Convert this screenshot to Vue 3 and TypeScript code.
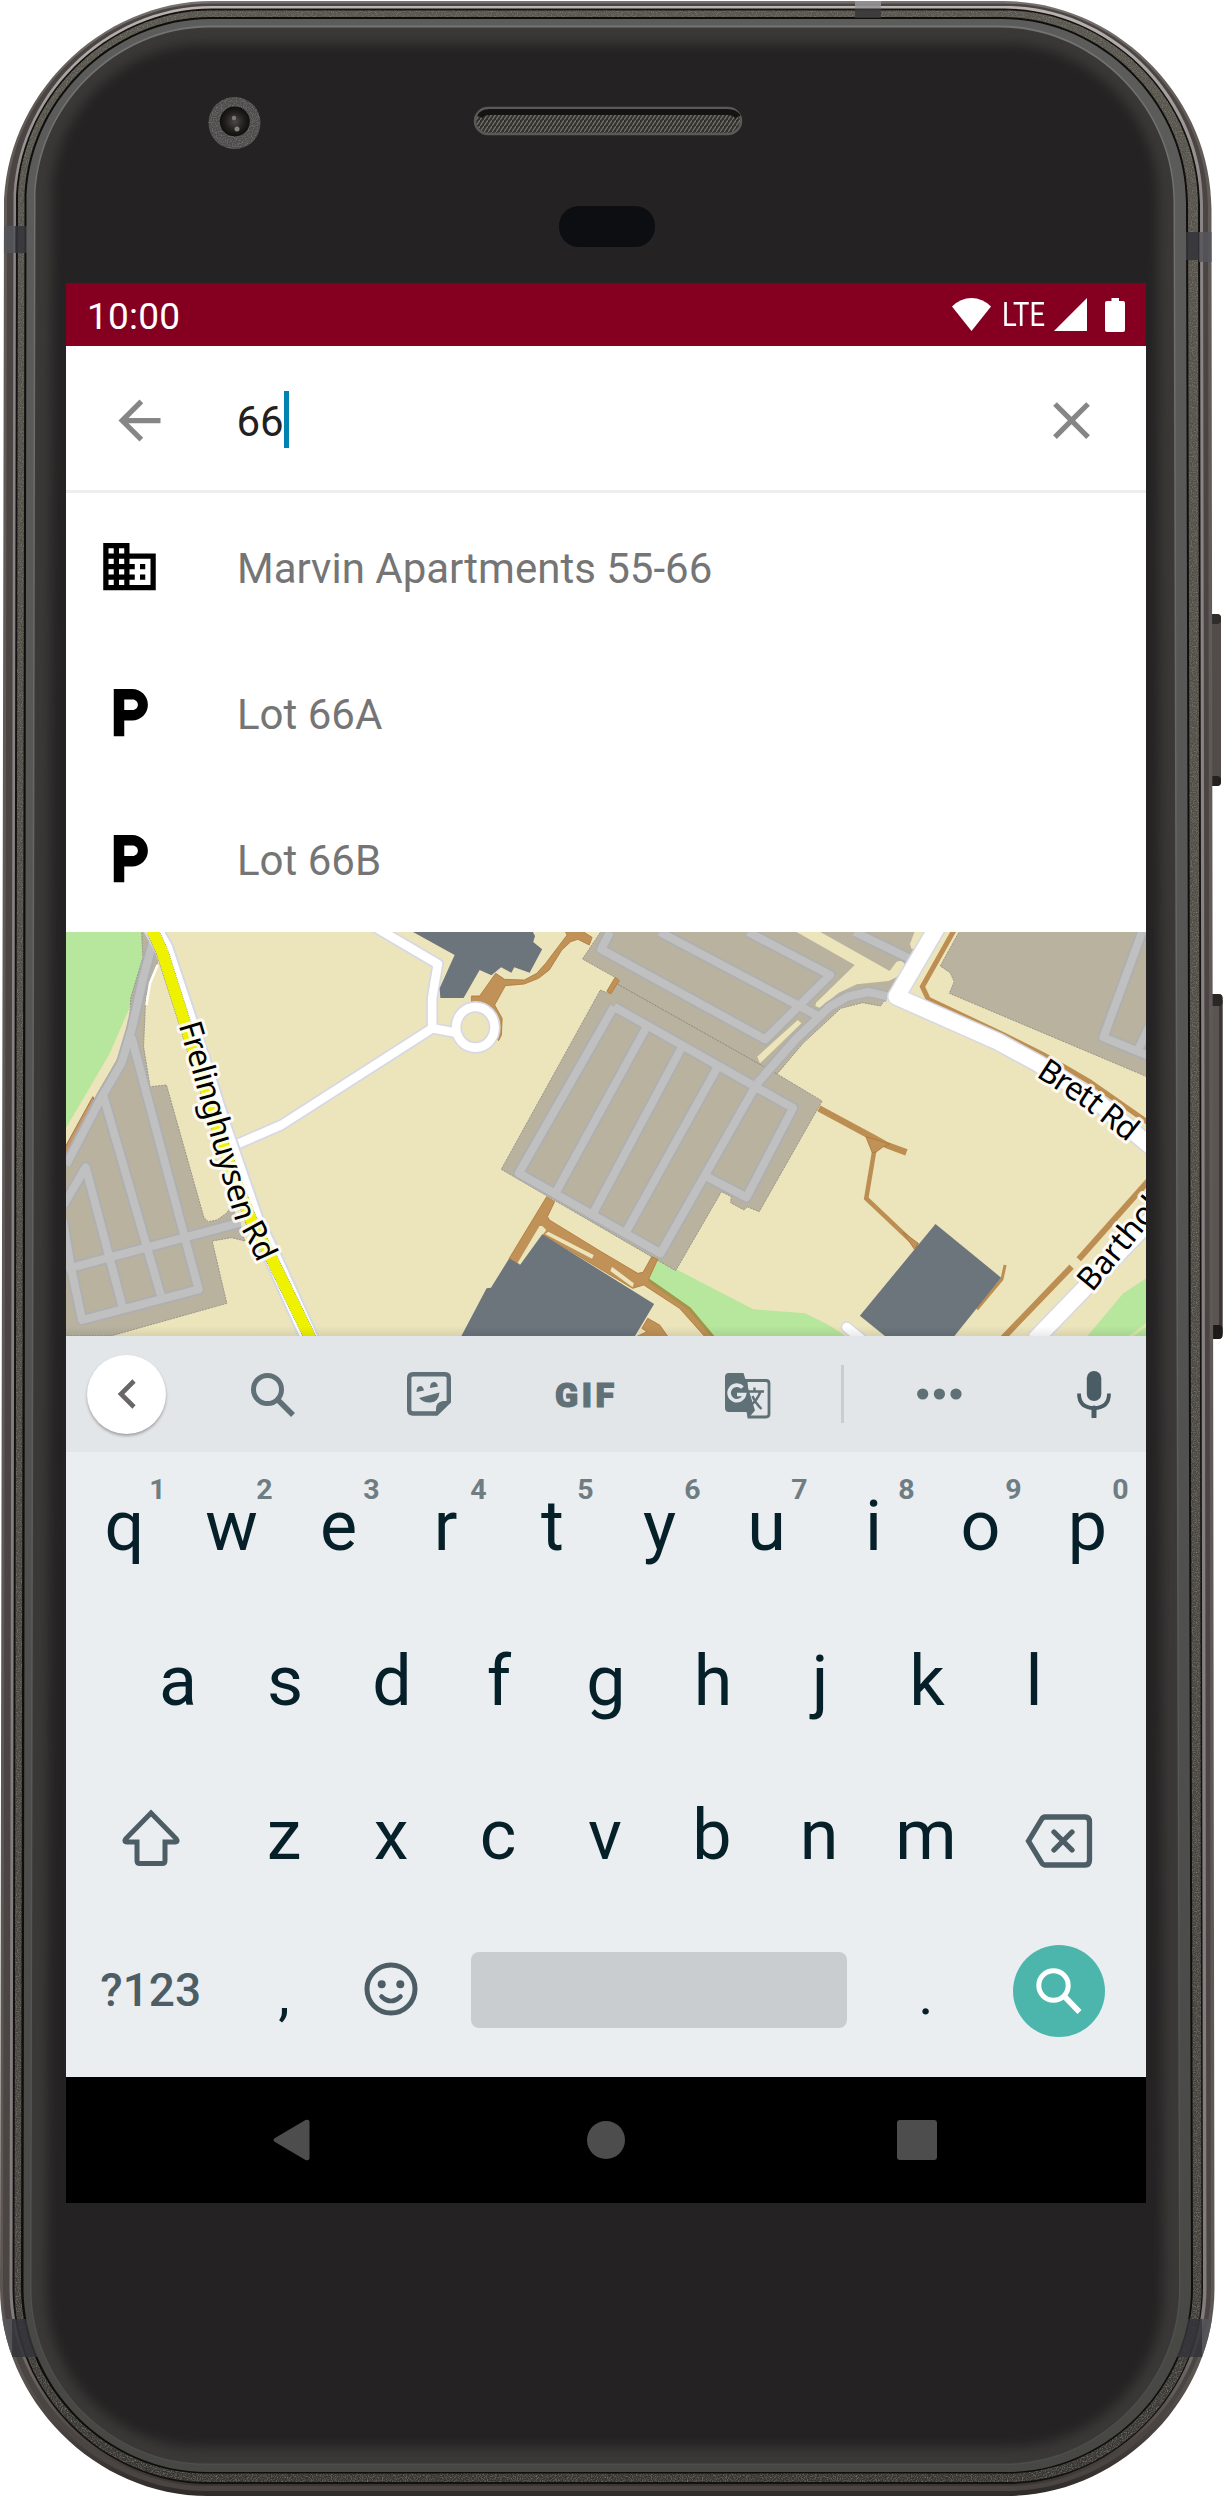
<script setup lang="ts">
interface Key {
  label: string
  hint?: string
}

interface Result {
  kind: 'building' | 'parking'
  name: string
}

const query = '66'

const results: Result[] = [
  { kind: 'building', name: 'Marvin Apartments 55-66' },
  { kind: 'parking', name: 'Lot 66A' },
  { kind: 'parking', name: 'Lot 66B' },
]

const iconPaths: Record<Result['kind'], string> = {
  building:
    'M12 7V3H2v18h20V7H12zM6 19H4v-2h2v2zm0-4H4v-2h2v2zm0-4H4V9h2v2zm0-4H4V5h2v2zm4 12H8v-2h2v2zm0-4H8v-2h2v2zm0-4H8V9h2v2zm0-4H8V5h2v2zm10 12h-8v-2h2v-2h-2v-2h2v-2h-2V9h8v10zm-2-8h-2v2h2v-2zm0 4h-2v2h2v-2z',
  parking:
    'M13 3H6v18h4v-6h3c3.31 0 6-2.69 6-6s-2.69-6-6-6zm.2 8H10V7h3.2c1.1 0 2 .9 2 2s-.9 2-2 2z',
}

const topRow: Key[] = 'qwertyuiop'.split('').map((label, i) => ({ label, hint: String((i + 1) % 10) }))
const homeRow: Key[] = 'asdfghjkl'.split('').map((label) => ({ label }))
const bottomRow: Key[] = 'zxcvbnm'.split('').map((label) => ({ label }))

// The body is slightly wider at the bottom, so every ring has its own top and bottom edges.
function ring(lt: number, lb: number, rt: number, rb: number, t: number, b: number, r: number): string {
  const k = r * 0.46
  return [
    `M${lt + r} ${t}H${rt - r}`,
    `C${rt - k} ${t} ${rt} ${t + k} ${rt} ${t + r}`,
    `L${rb} ${b - r}`,
    `C${rb} ${b - k} ${rb - k} ${b} ${rb - r} ${b}`,
    `H${lb + r}`,
    `C${lb + k} ${b} ${lb} ${b - k} ${lb} ${b - r}`,
    `L${lt} ${t + r}`,
    `C${lt} ${t + k} ${lt + k} ${t} ${lt + r} ${t}Z`,
  ].join('')
}

const shell = ring(4, 0, 1211.5, 1214.5, 1, 2496, 208)
const bezel = ring(26.5, 23.5, 1186, 1191, 19, 2472, 184)

const rings = [
  { d: shell, fill: 'url(#metal)' },
  { d: ring(7, 3, 1208, 1211, 3.5, 2491, 204), fill: '#4a4442' },
  { d: ring(13.5, 9.5, 1203, 1206.5, 6, 2486, 198), fill: 'url(#rim)' },
  { d: ring(16, 12.5, 1200, 1203, 8.5, 2484, 196), fill: '#141210' },
  { d: ring(18, 14.5, 1198, 1201.5, 10.5, 2482, 193), fill: 'url(#band)' },
  { d: ring(24.5, 21, 1188, 1193, 17, 2473.5, 186), fill: '#0f0e0d' },
]
const innerRings = [
  { d: bezel, fill: 'url(#bevel)' },
  { d: ring(34, 30, 1175, 1180.5, 25.5, 2465, 176), fill: 'url(#glint)' },
  { d: ring(35.5, 31.5, 1173.5, 1179, 27.5, 2463.5, 174), fill: '#3a3937' },
]
const glass = ring(52, 47, 1158, 1163, 44, 2447, 152)

// Centre lines of the lanes inside the parking lots.
const westAisles =
  'M262 60L235 165L200 330L172 430L112 540L17 735M200 350L388 1108L62 1200L30 1040L8 900M122 530L282 1125M10 855L72 742L176 1165M17 1047L505 908'
const centralAisles =
  'M25 36L3 88L415 358L578 165L372 36M150 36L548 288M640 36L785 120M722 229L675 216L622 230L577 260L490 360L395 490M35 260L485 564L368 832L265 768M35 260L-204 760L152 1000L395 490M115 325L-110 815M205 383L-15 875M295 442L68 930'
const eastAisles = 'M1364 30L1265 352L1400 418M1352 390L1380 320'
</script>

<template>
  <main class="phone">
    <svg class="body" width="1224" height="2498" viewBox="0 0 1224 2498" aria-hidden="true">
      <defs>
        <linearGradient id="metal" x1="0" y1="0" x2="0" y2="1">
          <stop offset="0" stop-color="#76706e" />
          <stop offset=".04" stop-color="#625c59" />
          <stop offset=".95" stop-color="#5c5653" />
          <stop offset="1" stop-color="#2f2b28" />
        </linearGradient>
        <linearGradient id="rim" x1="0" y1="0" x2="0" y2="1">
          <stop offset="0" stop-color="#b9b3b2" />
          <stop offset=".08" stop-color="#8c8585" />
          <stop offset=".93" stop-color="#837c7d" />
          <stop offset="1" stop-color="#3a3632" />
        </linearGradient>
        <linearGradient id="band" x1="0" y1="0" x2="0" y2="1">
          <stop offset="0" stop-color="#57544c" />
          <stop offset=".9" stop-color="#45423c" />
          <stop offset="1" stop-color="#36342f" />
        </linearGradient>
        <linearGradient id="bevel" x1="0" y1="0" x2="0" y2="1">
          <stop offset="0" stop-color="#5c5c5b" />
          <stop offset=".4" stop-color="#555554" />
          <stop offset="1" stop-color="#474744" />
        </linearGradient>
        <linearGradient id="glint" x1="0" y1="0" x2="0" y2="1">
          <stop offset="0" stop-color="#737373" />
          <stop offset="1" stop-color="#4d4d4b" />
        </linearGradient>
        <radialGradient id="lens">
          <stop offset="0" stop-color="#4b4845" />
          <stop offset=".6" stop-color="#23211f" />
          <stop offset="1" stop-color="#0f0e0d" />
        </radialGradient>
        <pattern id="mesh" width="4" height="6" patternUnits="userSpaceOnUse">
          <rect width="4" height="6" fill="#33322f" />
          <path d="M-1 7.5L5 -1.5" stroke="#706e68" stroke-width="1.3" />
        </pattern>
        <filter id="soft" x="-5%" y="-5%" width="110%" height="110%" color-interpolation-filters="sRGB">
          <feGaussianBlur stdDeviation="6" />
        </filter>
        <filter id="grain" x="0" y="0" width="100%" height="100%" color-interpolation-filters="sRGB">
          <feTurbulence type="fractalNoise" baseFrequency=".8" numOctaves="2" result="n" />
          <feColorMatrix in="n" type="matrix" values="0 0 0 0 .52  0 0 0 0 .51  0 0 0 0 .49  1.8 0 0 0 -.75" />
          <feComposite in2="SourceGraphic" operator="in" result="g" />
          <feMerge>
            <feMergeNode in="SourceGraphic" />
            <feMergeNode in="g" />
          </feMerge>
        </filter>
        <clipPath id="outline"><path :d="shell" /></clipPath>
      </defs>

      <rect x="1206" y="614" width="15" height="172" rx="4" fill="#514c49" />
      <rect x="1206" y="614" width="15" height="10" rx="4" fill="#2f2c2a" />
      <rect x="1206" y="776" width="15" height="10" rx="4" fill="#24211f" />
      <rect x="1206" y="994" width="16.500" height="345" rx="4" fill="#5a5552" />
      <rect x="1219" y="1000" width="3.500" height="334" fill="#3d3836" />
      <rect x="1206" y="994" width="16.500" height="12" rx="4" fill="#2a2725" />
      <rect x="1206" y="1325" width="16.500" height="14" rx="4" fill="#1d1a19" />

      <path
        v-for="(layer, i) in rings"
        :key="i"
        :d="layer.d"
        :fill="layer.fill"
        :filter="i === 4 ? 'url(#grain)' : undefined"
      />
      <g clip-path="url(#outline)">
        <path d="M0 226H15V253H0zM1199 232H1216V262H1199zM0 2319H14V2355H0zM1202 2319H1216V2357H1200z" fill="#55565b" opacity=".85" />
        <path d="M15 226H30V253H15zM1183 232H1199V260H1183zM12 2319H30L40 2357H12zM1180 2319H1202V2357H1175z" fill="#34343a" opacity=".85" />
        <path d="M855 0H881V8H855z" fill="#98979a" opacity=".85" />
        <path d="M855 9H881V18H855z" fill="#38373a" opacity=".85" />
      </g>
      <path v-for="(layer, i) in innerRings" :key="i" :d="layer.d" :fill="layer.fill" />
      <path :d="glass" fill="#242223" filter="url(#soft)" />

      <circle cx="234.500" cy="123" r="26" fill="#4d4b4c" filter="url(#grain)" />
      <circle cx="234.800" cy="121.500" r="15" fill="url(#lens)" />
      <circle cx="234" cy="118" r="2.200" fill="#7d7975" />
      <circle cx="237" cy="129" r="2.500" fill="#85817d" />

      <rect x="475" y="108" width="266" height="26" rx="13" fill="url(#mesh)" stroke="#5a5858" stroke-width="2.500" />
      <path d="M480 117Q482 112 490 112H727Q735 112 738 117" fill="none" stroke="#151412" stroke-width="6" />
      <rect x="559" y="206" width="96" height="41" rx="20" fill="#0d0e11" />
    </svg>

    <section class="screen">
      <header class="status">
        <span class="clock">10:00</span>
        <div class="status-icons">
          <svg class="wifi" width="39" height="33" viewBox="0 0 39 33">
            <path d="M19.500 33L0 8.500Q8.500 0 19.500 0T39 8.500z" fill="#fff" />
          </svg>
          <span class="lte">LTE</span>
          <svg class="signal" width="33" height="33" viewBox="0 0 33 33"><path d="M0 33L33 0V33z" fill="#fff" /></svg>
          <svg class="battery" width="20" height="34" viewBox="0 0 20 34">
            <path d="M6.500 0H14V3H18Q20 3 20 5V32Q20 34 18 34H2Q0 34 0 32V5Q0 3 2 3H6.500z" fill="#fff" />
          </svg>
        </div>
      </header>

      <div class="search">
        <svg class="back" width="63" height="63" viewBox="0 0 24 24">
          <path d="M20 11H7.830l5.590-5.590L12 4l-8 8 8 8 1.410-1.410L7.830 13H20v-2z" fill="#868686" />
        </svg>
        <span class="query">{{ query }}</span>
        <i class="caret"></i>
        <svg class="clear" width="63" height="63" viewBox="0 0 24 24">
          <path
            d="M19 6.410L17.590 5 12 10.590 6.410 5 5 6.410 10.590 12 5 17.590 6.410 19 12 13.410 17.590 19 19 17.590 13.410 12z"
            fill="#868686"
          />
        </svg>
      </div>

      <ul class="results">
        <li v-for="item in results" :key="item.name">
          <svg width="63" height="63" viewBox="0 0 24 24"><path :d="iconPaths[item.kind]" /></svg>
          <span>{{ item.name }}</span>
        </li>
      </ul>

      <svg class="map" width="1080" height="404" viewBox="66 932 1080 404">
        <rect x="66" y="932" width="1080" height="404" fill="#ece4bb" />

        <g class="tile" transform="translate(60 920) scale(.35714 .33333)">
          <path class="green" d="M0 36H228L232 112L192 270L138 403L0 655z" />
          <path
            class="lot"
            d="M228 30H262L275 120L240 230L234 380L252 500L298 495L403 893L415 905L440 900L468 878L480 855L518 963L480 953L426 963L467 1150L145 1247H0V740L100 530L165 410L190 340L195 300L198 235L232 112z"
          />
          <path d="M10 690L92 530L103 560L10 740z" fill="#c4986d" stroke="#a9763f" stroke-width="1" />
          <path class="aisle-edge" :d="westAisles" />
          <path class="aisle" :d="westAisles" />
          <path d="M242 255L252 190L273 135" fill="none" stroke="#fff" stroke-width="2.500" />

          <path
            class="path"
            d="M1152 228H1175L1220 160L1245 178L1300 180L1335 160L1360 130L1395 80L1420 45L1412 30H1457L1490 52L1482 75L1450 58L1430 65L1405 90L1370 150L1340 175L1300 192L1247 197L1217 255L1238 295L1236 345L1228 362L1222 355L1226 300L1200 262L1152 248z"
          />
          <path class="road-edge" d="M880 20L1058 132L1042 235V325L620 615L480 680M1042 325L1110 338" />
          <ellipse class="road-edge" cx="1163" cy="322" rx="54" ry="61" />
          <path class="road" d="M880 20L1058 132L1042 235V325L620 615L480 680M1042 325L1110 338" />
          <ellipse class="road" cx="1163" cy="322" rx="54" ry="61" />

          <path
            class="building"
            d="M975 28L1105 105L1063 205L1065 234H1130L1175 150L1208 166L1235 142L1264 158L1272 142L1315 158L1350 88L1325 66L1330 48L1320 28z"
          />

          <g fill="none">
            <path d="M258 20L292 85L362 310L402 440L455 620L500 760L545 900L595 1010L705 1270" stroke="#d6d8e3" stroke-width="20" />
            <path d="M258 20L292 85L362 310L402 440L455 620L500 760L545 900L595 1010L705 1270" stroke="#fff" stroke-width="16" />
            <path d="M254 20L286 95L350 310L388 440L440 620L483 760L535 900L590 1010L708 1270" stroke="#7e7a3a" stroke-width="12.500" stroke-dasharray="1 1" />
            <path d="M254 20L286 95L350 310L388 440L440 620L483 760L535 900L590 1010L708 1270" stroke="#eef200" stroke-width="11.500" />
          </g>
        </g>

        <g class="tile" transform="translate(600 920) scale(.39796 .33333)">
          <path class="green" d="M145 1020L195 1050L385 1168L515 1180L575 1215L620 1250H285L225 1165L122 1078z" />
          <path class="green" d="M1222 1252L1315 1120L1376 1072V1252z" />
          <path d="M1330 1252L1376 1212" stroke="#d9e8ab" stroke-width="3" />

          <path class="lot" d="M5 30L-44 117L50 180L20 220L1 210L-248 748L190 1052L305 815L330 830L328 848L362 870L370 860L400 875L558 543L445 462L510 370L605 265L660 248L705 258L830 30z" />
          <path class="land" d="M485 30H545L728 153L745 125L757 122L765 130L762 150L745 172L725 183L645 193L600 218L552 263L541 258L543 248L640 135z" />
          <path class="land" d="M792 30H830L800 85L783 87L779 72zM497 300L506 310L402 430L395 410z" />
          <path d="M45 193L445 462" stroke="#8b897f" stroke-width="1" stroke-dasharray="2 1" />
          <path class="aisle-edge" :d="centralAisles" />
          <path class="aisle" :d="centralAisles" />

          <path class="lot" d="M905 30H1380V473L878 220L890 185L880 158L855 138z" />
          <path class="aisle-edge" :d="eastAisles" />
          <path class="aisle" :d="eastAisles" />

          <path class="path" d="M38 172L48 182L27 222L17 214z" />
          <path
            class="path"
            d="M-134 830L-114 845L-132 890L-127 900L0 993L95 1060L108 1057L130 1010L145 1018L122 1078L225 1165L287 1252H265L200 1165L110 1095L82 1105L-145 943L-201 1035L-228 1015z"
          />
          <path d="M122 1080L225 1166L284 1250" fill="none" stroke="#a3954a" stroke-width="3" />
          <path class="land" d="M-152 918H-145L-135 930L-200 1035L-207 1028zM-130 935L-16 1005L-20 1016L-138 942zM30 1040L85 1090L82 1102L26 1053z" />
          <path class="path" d="M120 1195L150 1215L172 1252H88L118 1235L105 1225z" />
          <path class="building" d="M-228 1015L-201 1035L-145 943L136 1152L86 1252H-350L-285 1105L-274 1103z" />

          <g class="trail">
            <path d="M550 565L690 655L720 675L770 697" stroke-width="6.500" />
            <path d="M692 675L688 700L669 835L797 980" stroke-width="4.500" />
            <path d="M1018 1035L1010 1078L947 1168" stroke-width="3" />
            <path d="M890 30L810 200L825 238L1015 345L1115 405L1230 485L1380 610" stroke-width="5" />
            <path d="M1012 1255L1185 1040M1203 1018L1380 780" stroke-width="6" />
          </g>
          <path class="path" d="M668 650L684 698L694 696L712 680L728 672zM762 937L800 970L790 988z" />
          <path class="building" d="M843 912L1008 1073L888 1252H720L653 1187z" />

          <g fill="none" stroke-linejoin="round">
            <path d="M848 20L745 230L1000 365L1100 430L1250 545L1400 695M1092 1260L1420 855" stroke="#d6d8e3" stroke-width="19" />
            <path d="M848 20L745 230L1000 365L1100 430L1250 545L1400 695M1092 1260L1420 855" stroke="#fff" stroke-width="16" />
            <path d="M620 1222L665 1265" stroke="#d6d8e3" stroke-width="12" stroke-linecap="round" />
            <path d="M620 1222L665 1265" stroke="#fff" stroke-width="9" stroke-linecap="round" />
          </g>
        </g>

        <defs>
          <path id="frelinghuysen" d="M178.500 1025L189 1060L211 1139L234 1216L246 1238L263 1274L280 1310" />
          <path id="brett" d="M1035.500 1076L1083 1107L1140 1152" />
          <path id="barthol" d="M1092 1293L1190 1175" />
          <linearGradient id="fade" x1="0" y1="0" x2="0" y2="1">
            <stop offset="0" stop-color="#000" stop-opacity="0" />
            <stop offset="1" stop-color="#000" stop-opacity=".08" />
          </linearGradient>
        </defs>
        <g class="street">
          <text><textPath href="#frelinghuysen" textLength="252">Frelinghuysen Rd</textPath></text>
          <text><textPath href="#brett" textLength="114">Brett Rd</textPath></text>
          <text><textPath href="#barthol">Barthol</textPath></text>
        </g>
        <rect x="66" y="1326" width="1080" height="10" fill="url(#fade)" />
      </svg>

      <div class="keyboard">
        <div class="tools">
          <button class="collapse" aria-label="Back">
            <svg width="20" height="32" viewBox="0 0 20 32"><path d="M17 3L4 16L17 29" fill="none" stroke="#696665" stroke-width="4.600" /></svg>
          </button>
          <svg class="find" width="46" height="46" viewBox="0 0 46 46" fill="none" stroke="#5f7077">
            <circle cx="17.500" cy="17.500" r="14" stroke-width="5" />
            <path d="M28 28L43 43" stroke-width="5.500" />
          </svg>
          <svg class="sticker" width="44" height="44" viewBox="0 0 44 44">
            <path d="M6 2.200H38Q41.800 2.200 41.800 6V29.500L29.500 41.500H6Q2.200 41.500 2.200 37.500V6Q2.200 2.200 6 2.200z" fill="none" stroke="#5f7077" stroke-width="4.400" />
            <path d="M42 29H36Q29 30 29 37V42z" fill="#5f7077" />
            <path d="M9.500 20Q9.500 14 13.500 14Q16 14 17 18.500zM23 16Q23 10 27 10Q30 10 31 14.500zM12 26L32.500 20.500Q31.500 30 23.500 30.500Q17 31 12 26z" fill="#5f7077" />
          </svg>
          <span class="gif">GIF</span>
          <svg class="translate" width="46" height="46" viewBox="0 0 46 46">
            <path d="M21 7.500H41Q44 7.500 44 10.500V41Q44 44 41 44H24z" fill="#e3e6e9" stroke="#5f7077" stroke-width="2.800" />
            <path d="M4 0H18.500L30 37.500L23 45.500L21.500 39H4Q0 39 0 35V4Q0 0 4 0z" fill="#5f7077" />
            <path d="M17.500 14.500A7.800 7.800 0 1 0 19.500 21.500H12" fill="none" stroke="#e3e6e9" stroke-width="3.600" />
            <path d="M24 18.500H39M29.500 14.500V18.500M35.500 18.500Q32.500 27 25.500 32.500M27.500 23Q30 29.500 36.500 36" fill="none" stroke="#5f7077" stroke-width="2.400" />
          </svg>
          <i class="divider"></i>
          <svg class="more" width="45" height="12" viewBox="0 0 45 12" fill="#5f7077">
            <circle cx="5.700" cy="6" r="5.600" />
            <circle cx="22.400" cy="6" r="5.600" />
            <circle cx="39" cy="6" r="5.600" />
          </svg>
          <svg class="mic" width="34" height="47" viewBox="0 0 34 47">
            <rect x="9.800" y="0" width="14.500" height="30" rx="7.200" fill="#4a5c64" />
            <path d="M2 22.500Q2 37 17 37T32 22.500" fill="none" stroke="#4a5c64" stroke-width="3.800" />
            <path d="M17 37V46" stroke="#4a5c64" stroke-width="5" stroke-linecap="round" />
          </svg>
        </div>

        <div class="row">
          <span v-for="key in topRow" :key="key.label" class="key">
            {{ key.label }}<sup>{{ key.hint }}</sup>
          </span>
        </div>
        <div class="row home">
          <span v-for="key in homeRow" :key="key.label" class="key">{{ key.label }}</span>
        </div>
        <div class="row">
          <span class="wide">
            <svg width="60" height="58" viewBox="0 0 60 58">
              <path
                d="M30 4L55 29.500Q57.500 33 54 33H44V51.500Q44 54.500 41 54.500H19Q16 54.500 16 51.500V33H6Q2.500 33 5 29.500z"
                fill="none"
                stroke="#4c5d65"
                stroke-width="5"
              />
            </svg>
          </span>
          <span v-for="key in bottomRow" :key="key.label" class="key">{{ key.label }}</span>
          <span class="wide">
            <svg class="erase" width="68" height="54" viewBox="0 0 68 54" fill="none" stroke="#4c5d65" stroke-width="5.300">
              <path d="M20 3H60Q64.500 3 64.500 8V46Q64.500 51 60 51H20Q18 51 16.500 48.500L3.500 27L16.500 5.500Q18 3 20 3z" />
              <path d="M29 18L47 36M47 18L29 36" stroke-linecap="round" />
            </svg>
          </span>
        </div>
        <div class="row last">
          <span class="wide symbols">?123</span>
          <span class="key mark">,</span>
          <span class="key emoji">
            <svg width="54" height="54" viewBox="0 0 54 54">
              <circle cx="27" cy="27" r="24" fill="none" stroke="#4c5d65" stroke-width="5" />
              <circle cx="17.700" cy="22.300" r="4" fill="#4c5d65" />
              <circle cx="36.300" cy="22.300" r="4" fill="#4c5d65" />
              <path d="M17.500 34.500Q27 43.500 36.500 34.500" fill="none" stroke="#4c5d65" stroke-width="4.500" stroke-linecap="round" />
            </svg>
          </span>
          <span class="space"></span>
          <span class="key mark">.</span>
          <span class="wide">
            <span class="go">
              <svg width="47" height="47" viewBox="0 0 47 47" fill="none" stroke="#fff">
                <circle cx="17.500" cy="17.500" r="14.700" stroke-width="5" />
                <path d="M28 28L43.500 44" stroke-width="5.600" />
              </svg>
            </span>
          </span>
        </div>
      </div>

      <nav class="nav">
        <svg width="37" height="42" viewBox="0 0 37 42"><path d="M2 19L32.500 1Q36.500 0 36.500 3V39Q36.500 42 32.500 41L2 23Q-1 21 2 19z" fill="#4d4d4d" /></svg>
        <svg class="home-dot" width="38" height="38" viewBox="0 0 38 38"><circle cx="19" cy="19" r="19" fill="#4d4d4d" /></svg>
        <svg width="40" height="40" viewBox="0 0 40 40"><rect width="40" height="40" rx="3" fill="#4d4d4d" /></svg>
      </nav>
    </section>
  </main>
</template>

<style>
body {
  margin: 0;
  background: #fff;
}
</style>

<style scoped>
.phone {
  position: relative;
  width: 1224px;
  height: 2498px;
  box-sizing: border-box;
  padding: 283px 78px 0 66px;
  overflow: hidden;
  font-family: Roboto, 'Liberation Sans', sans-serif;
}

.body {
  position: absolute;
  left: 0;
  top: 0;
}

svg {
  display: block;
  flex: none;
}

.screen {
  position: relative;
  width: 1080px;
  height: 1920px;
  display: flex;
  flex-direction: column;
  background: #fff;
}

.status {
  height: 63px;
  box-sizing: border-box;
  padding: 4px 21px 0 21px;
  display: flex;
  justify-content: space-between;
  align-items: center;
  background: #850020;
  color: #fff;
}

.clock {
  font-size: 37px;
  letter-spacing: 0.2px;
}

.status-icons {
  display: flex;
  align-items: center;
  height: 34px;
  margin-top: -4px;
}

.lte {
  width: 46.5px;
  margin: 0 5px 0 11px;
  font-size: 33px;
  line-height: 34px;
  transform: scaleX(0.83);
  transform-origin: 0 50%;
}

.battery {
  margin-left: 18.5px;
}

.search {
  height: 144px;
  display: flex;
  align-items: center;
  padding: 4px 43px 0 42px;
  box-sizing: border-box;
}

.query {
  margin: 3px 0 0 65.5px;
  font-size: 42px;
  color: #212121;
}

.caret {
  width: 5px;
  height: 57px;
  margin: -1px 0 0 0;
  background: #0083b0;
}

.clear {
  margin-left: auto;
}

.results {
  margin: 0;
  padding: 0;
  list-style: none;
  height: 442px;
  box-sizing: border-box;
  border-top: 3px solid #eee;
  display: flex;
  flex-direction: column;
}

.results li {
  flex: 1;
  display: flex;
  align-items: center;
  padding-left: 31.5px;
  font-size: 42px;
  color: #757575;
}

.results span {
  margin: 4px 0 0 76.5px;
}

.tile path,
.tile ellipse {
  vector-effect: non-scaling-stroke;
}

.land {
  fill: #ece4bb;
}

.green {
  fill: #b6e79d;
}

.lot {
  fill: #b8b29f;
  stroke: #98958a;
  stroke-width: 1;
  stroke-dasharray: 2 1;
}

.building {
  fill: #6c757c;
}

.path {
  fill: #c09257;
  stroke: #ad7636;
  stroke-width: 0.8;
}

.trail {
  fill: none;
  stroke: #bd8e52;
}

.aisle-edge {
  fill: none;
  stroke: #aeafb3;
  stroke-width: 11.5;
  stroke-linejoin: round;
}

.aisle {
  fill: none;
  stroke: #c0c0c0;
  stroke-width: 8;
  stroke-linejoin: round;
}

.road-edge {
  fill: none;
  stroke: #d6d8e3;
  stroke-width: 12;
  stroke-linejoin: round;
}

.road {
  fill: none;
  stroke: #fff;
  stroke-width: 8.6;
  stroke-linejoin: round;
}

.street {
  font-family: 'Noto Sans', 'Open Sans', sans-serif;
  font-size: 32px;
  fill: #000;
  stroke: rgba(255, 255, 255, 0.85);
  stroke-width: 6px;
  stroke-linejoin: round;
  paint-order: stroke;
}

.keyboard {
  height: 741px;
  background: #ebeef1;
}

.tools {
  height: 116px;
  display: flex;
  align-items: center;
  background: #e3e6e9;
  color: #5f7077;
}

.collapse {
  width: 79px;
  height: 79px;
  margin-left: 21px;
  padding: 0;
  border: 0;
  border-radius: 50%;
  display: flex;
  align-items: center;
  justify-content: center;
  background: #fff;
  box-shadow: 0 2px 3px rgba(0, 0, 0, 0.3);
}

.find {
  margin-left: 84px;
  margin-top: 2px;
}

.sticker {
  margin-left: 110.5px;
}

.gif {
  width: 66px;
  margin: 2px 0 0 104.5px;
  font-size: 34px;
  font-weight: 900;
  letter-spacing: 3.5px;
  line-height: 40px;
  -webkit-text-stroke: 1.2px #5f7077;
}

.translate {
  margin-left: 103.5px;
  margin-top: 3px;
}

.divider {
  width: 3px;
  height: 58px;
  margin-left: 70px;
  background: #c9cdd0;
}

.more {
  margin-left: 73.5px;
}

.mic {
  margin-left: 115px;
}

.row {
  height: 154.5px;
  padding-left: 5px;
  display: flex;
}

.home {
  padding-left: 58.5px;
}

.key {
  position: relative;
  width: 107px;
  height: 149.5px;
  line-height: 149.5px;
  text-align: center;
  font-size: 70px;
  color: #06202a;
}

.key sup {
  position: absolute;
  left: 50%;
  top: 21px;
  width: 66px;
  text-align: center;
  line-height: 34px;
  font-size: 28.5px;
  font-weight: 700;
  color: #6f7d83;
}

.wide {
  width: 159.5px;
  display: flex;
  align-items: center;
  justify-content: center;
}

.erase {
  margin-top: 5px;
}

.last {
  height: 149.5px;
  align-items: center;
}

.symbols {
  font-size: 46px;
  font-weight: 500;
  color: #4c5d65;
}

.mark {
  font-size: 58px;
  line-height: 157px;
}

.emoji {
  display: flex;
  align-items: center;
  justify-content: center;
  padding-bottom: 3px;
  box-sizing: border-box;
}

.space {
  width: 376px;
  height: 76px;
  margin: 0 26px;
  border-radius: 8px;
  background: #c9cdd0;
}

.go {
  width: 92px;
  height: 92px;
  margin-top: 2px;
  border-radius: 50%;
  display: flex;
  align-items: center;
  justify-content: center;
  background: #4db6ac;
}

.nav {
  height: 126px;
  display: flex;
  align-items: center;
  justify-content: space-between;
  padding: 0 209px 0 207px;
  background: #000;
}

.home-dot {
  margin-left: 4px;
}
</style>
